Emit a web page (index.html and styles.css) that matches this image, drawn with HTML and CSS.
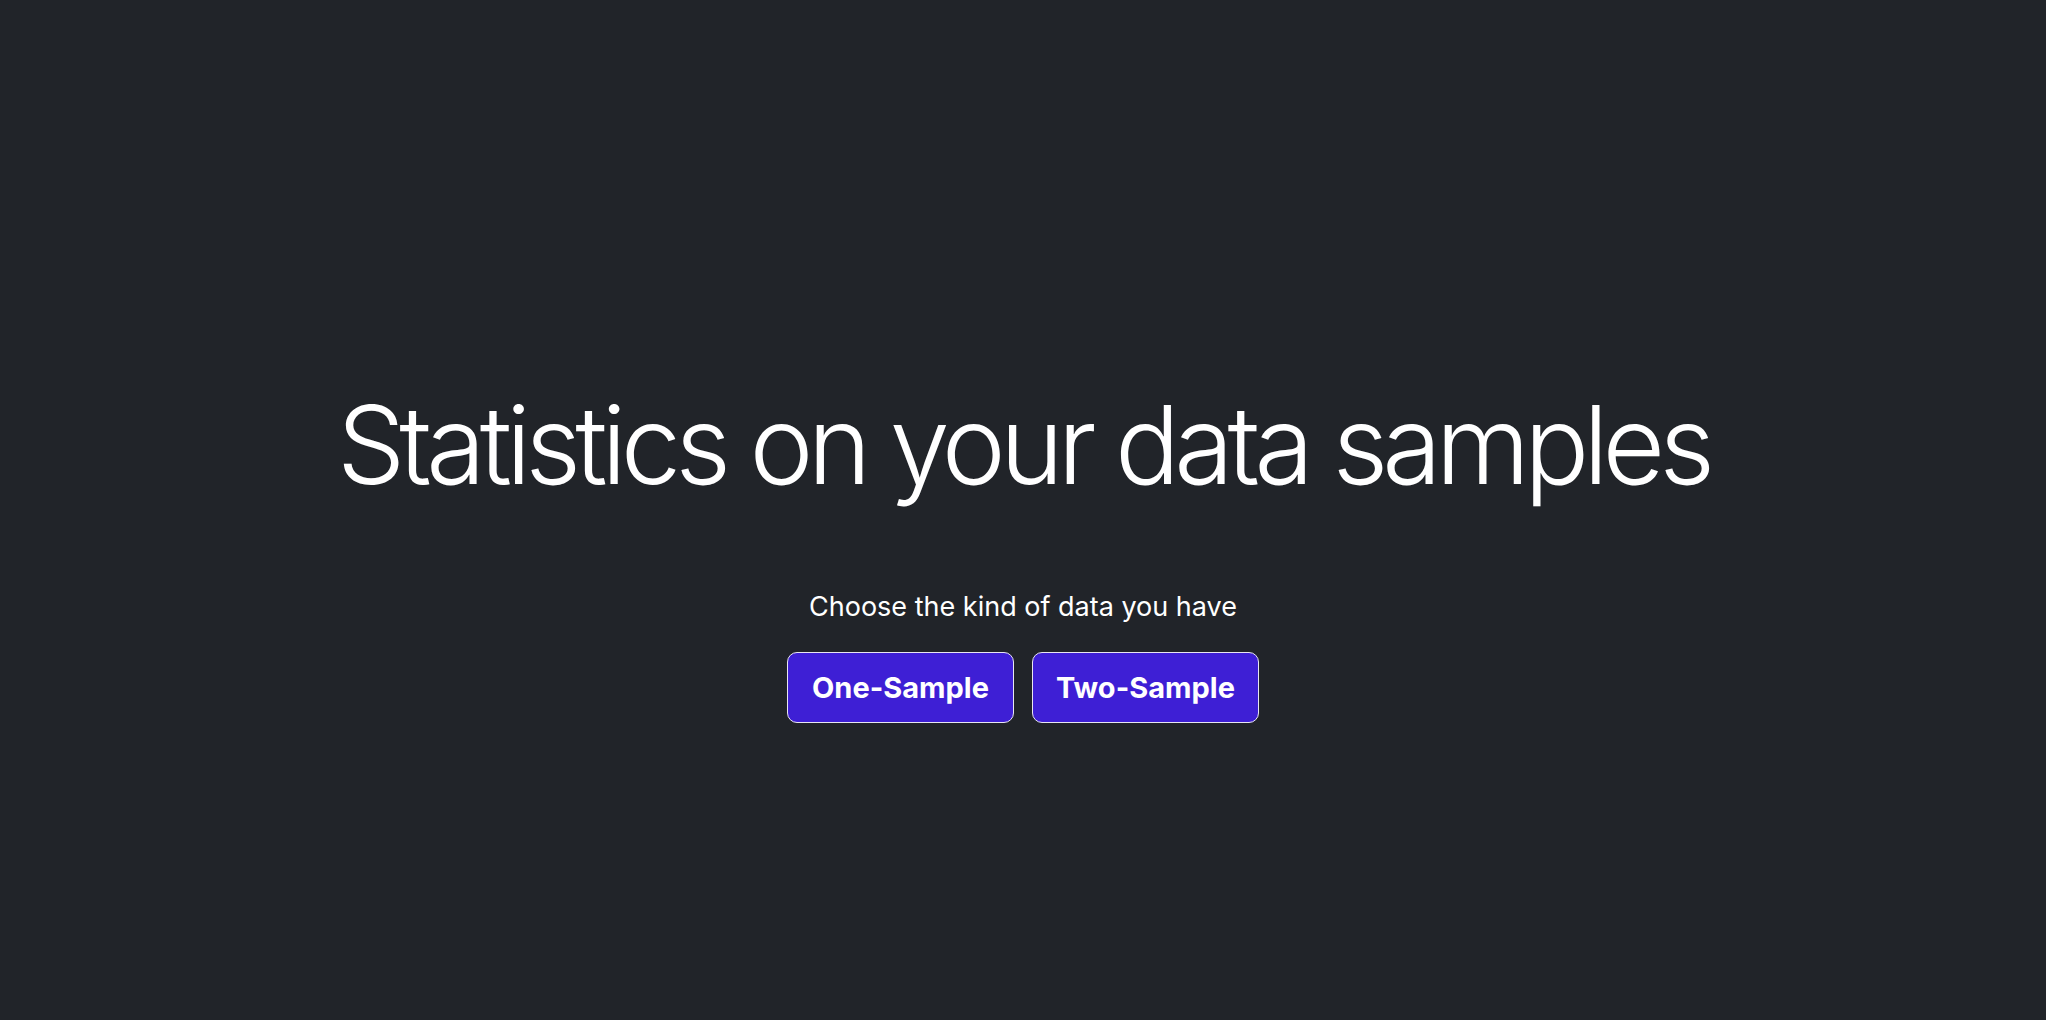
FILE: index.html
```html
<!DOCTYPE html>
<html lang="en">
<head>
<meta charset="utf-8">
<title>Statistics on your data samples</title>
<link rel="stylesheet" href="styles.css">
</head>
<body>
<main class="hero">
  <h1 class="title">Statistics on your data samples</h1>
  <p class="subtitle">Choose the kind of data you have</p>
  <div class="actions">
    <button class="btn" type="button">One-Sample</button>
    <button class="btn" type="button">Two-Sample</button>
  </div>
</main>
</body>
</html>
```

FILE: styles.css
```css
html, body {
  margin: 0;
  padding: 0;
  height: 100%;
}
body {
  background: #212429;
  color: #ffffff;
  font-family: Inter, "Noto Sans", sans-serif;
}
.hero {
  min-height: 100%;
  display: flex;
  flex-direction: column;
  align-items: center;
  justify-content: flex-start;
  padding-top: 380px;
  box-sizing: border-box;
}
.title {
  margin: 0;
  font-size: 108px;
  font-weight: 300;
  line-height: 1.2;
  letter-spacing: -5.9px;
}
.subtitle {
  margin: 81px 0 0;
  font-size: 27px;
  font-weight: 400;
  line-height: 1.2;
}
.actions {
  display: flex;
  gap: 18px;
  margin-top: 29px;
}
.btn {
  width: 227px;
  height: 71px;
  background: #3e1fd5;
  color: #ffffff;
  border: 1px solid #e8e6f2;
  border-radius: 10px;
  font-family: Inter, "Noto Sans", sans-serif;
  font-size: 29px;
  font-weight: 700;
  cursor: pointer;
}
```
